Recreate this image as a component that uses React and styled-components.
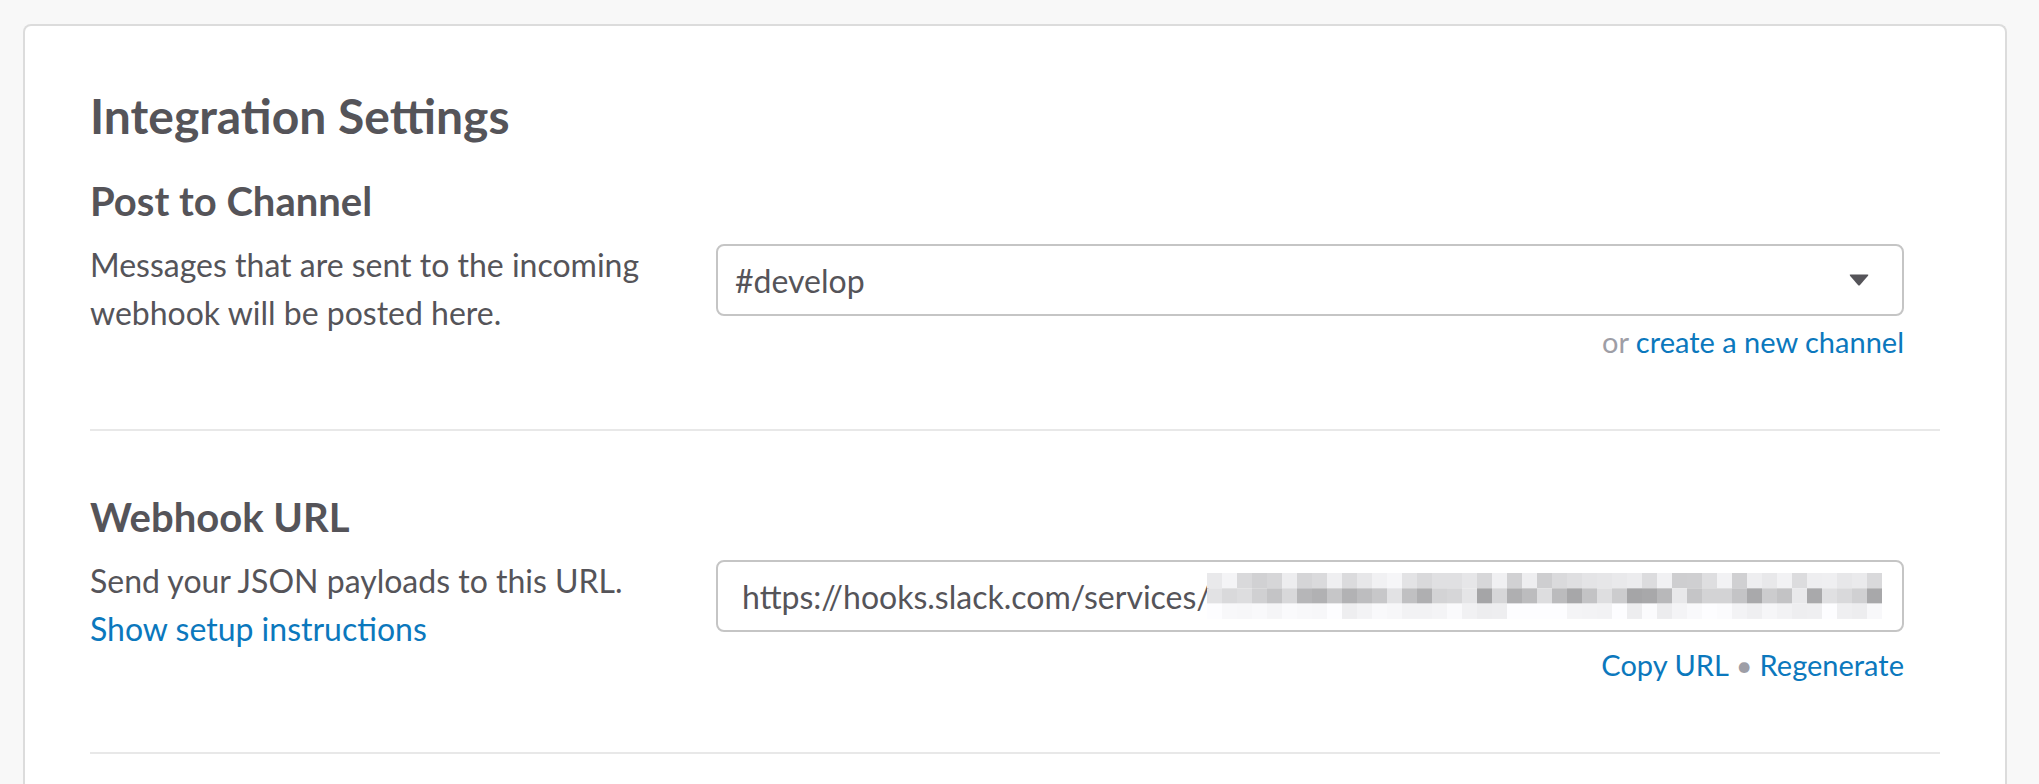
import React from 'react';
import styled, { createGlobalStyle } from 'styled-components';

const GlobalStyle = createGlobalStyle`
  html, body {
    margin: 0;
    padding: 0;
    background: #f8f8f8;
    font-family: Lato, "Open Sans", sans-serif;
    color: #555459;
    overflow: hidden;
  }
`;

const Page = styled.div`
  padding: 24px 32px 0 23px;
`;

const Card = styled.div`
  min-height: 900px;
  background: #fff;
  border: 2px solid #dcdcdc;
  border-bottom: none;
  border-radius: 8px 8px 0 0;
  padding: 61px 65px 40px 65px;
`;

const Title = styled.h1`
  margin: 0;
  font-size: 48px;
  line-height: 58px;
  font-weight: 700;
`;

const Section = styled.section`
  padding: ${p => (p.first ? '32px' : '62px')} 0 67px;
  border-bottom: 2px solid #e8e8e8;
`;

const Heading = styled.h2`
  margin: 0 0 16px;
  font-size: 40px;
  line-height: 48px;
  font-weight: 700;
`;

const Row = styled.div`
  display: grid;
  grid-template-columns: 626px minmax(0, 1fr);
  padding-right: 36px;
`;

const Desc = styled.p`
  margin: 0;
  font-size: 32px;
  line-height: 48px;
`;

const Link = styled.a`
  color: #0b78bd;
  text-decoration: none;
  cursor: pointer;
`;

const Control = styled.div`
  min-width: 0;
`;

const Field = styled.div`
  display: flex;
  align-items: center;
  height: 72px;
  box-sizing: border-box;
  margin-top: 3px;
  padding: 0 33px 0 ${p => p.pad || 17}px;
  border: 2px solid #c5c5c5;
  border-radius: 8px;
  font-size: 32px;
  overflow: hidden;
  white-space: nowrap;
`;

const FieldText = styled.span`
  flex: ${p => (p.fixed ? 'none' : 1)};
  color: #555459;
`;

const Caret = styled.svg`
  width: 20px;
  height: 12px;
  flex: none;
`;

const Below = styled.div`
  text-align: right;
  font-size: 29px;
  line-height: 40px;
  margin-top: ${p => p.gap || 6}px;
  color: #9e9ea6;
`;

const Dot = styled.span`
  color: #9e9ea6;
  margin: 0 7px;
`;

const Blur = styled.svg`
  flex: none;
  margin-left: -4px;
`;

const Mosaic = ({ cols = 45, rows = 3 }) => {
  let seed = 11;
  const rand = () => {
    seed = (seed * 9301 + 49297) % 233280;
    return seed / 233280;
  };
  const base = [226, 198, 246];
  const spread = [22, 36, 10];
  const cells = [];
  for (let r = 0; r < rows; r++) {
    for (let c = 0; c < cols; c++) {
      const v = Math.round(base[r] + (rand() - 0.5) * spread[r] * 2);
      const g = Math.max(165, Math.min(253, v));
      cells.push(
        <rect key={`${r}-${c}`} x={c * 15} y={r * 15.3} width="15" height="15.3" fill={`rgb(${g},${g},${g + 2})`} />
      );
    }
  }
  return (
    <Blur width={cols * 15} height={46}>
      {cells}
    </Blur>
  );
};

const App = () => (
  <>
    <GlobalStyle />
    <Page>
      <Card>
        <Title>Integration Settings</Title>
        <Section first>
          <Heading>Post to Channel</Heading>
          <Row>
            <Desc>
              Messages that are sent to the incoming
              <br />
              webhook will be posted here.
            </Desc>
            <Control>
              <Field>
                <FieldText>#develop</FieldText>
                <Caret viewBox="0 0 20 12">
                  <path d="M1.5 0.5 H18.5 Q20 0.5 19 1.8 L11 11 Q10 12 9 11 L1 1.8 Q0 0.5 1.5 0.5 Z" fill="#555459" />
                </Caret>
              </Field>
              <Below gap={6}>
                or <Link>create a new channel</Link>
              </Below>
            </Control>
          </Row>
        </Section>
        <Section>
          <Heading>Webhook URL</Heading>
          <Row>
            <Desc>
              Send your JSON payloads to this URL.
              <br />
              <Link>Show setup instructions</Link>
            </Desc>
            <Control>
              <Field pad={24}>
                <FieldText fixed>https://hooks.slack.com/services/</FieldText>
                <Mosaic />
              </Field>
              <Below gap={13}>
                <Link>Copy URL</Link>
                <Dot>•</Dot>
                <Link>Regenerate</Link>
              </Below>
            </Control>
          </Row>
        </Section>
      </Card>
    </Page>
  </>
);

export default App;
